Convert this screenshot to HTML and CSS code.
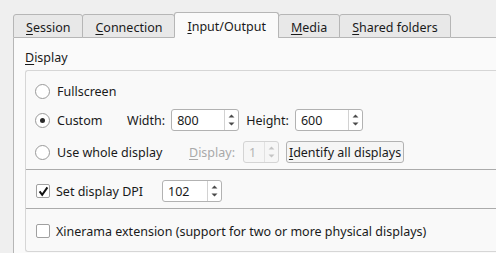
FILE: index.html
```html
<!DOCTYPE html>
<html>
<head>
<meta charset="utf-8">
<link rel="stylesheet" href="styles.css">
</head>
<body>
<div class="window">
  <div class="tabbar">
    <div class="tab"><u>S</u>ession</div>
    <div class="tab"><u>C</u>onnection</div>
    <div class="tab active"><u>I</u>nput/Output</div>
    <div class="tab"><u>M</u>edia</div>
    <div class="tab"><u>S</u>hared folders</div>
    <div class="tab-fill"></div>
  </div>
  <div class="pane">
    <div class="group-title"><u>D</u>isplay</div>
    <div class="group">
      <div class="section radios">
        <div class="row">
          <label class="opt"><span class="radio"></span>Fullscreen</label>
        </div>
        <div class="row">
          <label class="opt opt-custom"><span class="radio checked"></span>Custom</label>
          <span class="lbl">Width:</span>
          <div class="spin spin-wh"><span class="val">800</span><span class="arrows"><svg width="13" height="20" viewBox="0 0 13 20"><path d="M3.5 7.5 L6.5 4.5 L9.5 7.5 Z M3.5 12.5 L6.5 15.5 L9.5 12.5 Z" fill="#4a4a4a"/></svg></span></div>
          <span class="lbl lbl-h">Height:</span>
          <div class="spin spin-wh"><span class="val">600</span><span class="arrows"><svg width="13" height="20" viewBox="0 0 13 20"><path d="M3.5 7.5 L6.5 4.5 L9.5 7.5 Z M3.5 12.5 L6.5 15.5 L9.5 12.5 Z" fill="#4a4a4a"/></svg></span></div>
        </div>
        <div class="row">
          <label class="opt opt-whole"><span class="radio"></span>Use whole display</label>
          <span class="lbl disabled"><u>D</u>isplay:</span>
          <div class="spin spin-disp disabled"><span class="val">1</span><span class="arrows"><svg width="13" height="20" viewBox="0 0 13 20"><path d="M3.5 7.5 L6.5 4.5 L9.5 7.5 Z M3.5 12.5 L6.5 15.5 L9.5 12.5 Z" fill="#c4c4c4"/></svg></span></div>
          <button class="btn"><u>I</u>dentify all displays</button>
        </div>
      </div>
      <div class="sep"></div>
      <div class="section dpi">
        <div class="row">
          <label class="opt opt-dpi"><span class="check"><svg width="11" height="11" viewBox="0 0 11 11"><path d="M1.6 5.4 L4.2 8.8 L9.4 1.4" fill="none" stroke="#111111" stroke-width="2"/></svg></span>Set display DPI</label>
          <div class="spin spin-dpi"><span class="val">102</span><span class="arrows"><svg width="13" height="20" viewBox="0 0 13 20"><path d="M3.5 7.5 L6.5 4.5 L9.5 7.5 Z M3.5 12.5 L6.5 15.5 L9.5 12.5 Z" fill="#4a4a4a"/></svg></span></div>
        </div>
      </div>
      <div class="sep"></div>
      <div class="section xin">
        <div class="row">
          <label class="opt"><span class="check"></span>Xinerama extension (support for two or more physical displays)</label>
        </div>
      </div>
    </div>
  </div>
</div>
</body>
</html>
```

FILE: styles.css
```css
html, body {
  margin: 0;
  padding: 0;
  background: #efefef;
  width: 496px;
  height: 253px;
  overflow: hidden;
}
body {
  font-family: "Noto Sans", "Open Sans", "DejaVu Sans", sans-serif;
  font-size: 12.5px;
  color: #1a1a1a;
}
u {
  text-decoration: underline;
  text-underline-offset: 2px;
}
.window {
  padding: 12px 0 0 13px;
}
.tabbar {
  display: flex;
  align-items: flex-end;
  height: 26px;
}
.tab {
  box-sizing: border-box;
  height: 24px;
  padding: 0 12px;
  display: flex;
  align-items: center;
  padding-top: 3px;
  background: #e8e8e8;
  border: 1px solid #b6b6b6;
  border-radius: 3px 3px 0 0;
  margin-left: -1px;
  white-space: nowrap;
}
.tab:first-child {
  margin-left: 0;
}
.tab.active {
  height: 26px;
  background: #fafafa;
  border-bottom-color: #fafafa;
  padding-top: 2px;
}
.tab-fill {
  flex: 1;
  border-bottom: 1px solid #b6b6b6;
  height: 0;
}
.pane {
  background: #fafafa;
  border-left: 1px solid #b6b6b6;
  height: 215px;
  padding: 0 0 0 11px;
}
.group-title {
  height: 32px;
  line-height: 14px;
  padding-top: 13px;
  box-sizing: border-box;
}
.group {
  border: 1px solid #d6d6d6;
  border-right: none;
  border-radius: 3px 0 0 3px;
  background: #f9f9f9;
  height: 182px;
  box-sizing: border-box;
}
.section {
  padding-left: 9px;
}
.radios {
  padding-top: 9px;
  padding-bottom: 6px;
}
.dpi {
  padding-top: 10px;
  padding-bottom: 6px;
}
.xin {
  padding-top: 11px;
}
.row {
  display: flex;
  align-items: center;
  height: 22px;
  white-space: nowrap;
}
.radios .row + .row {
  margin-top: 7px;
}
.radios .row:last-child {
  margin-top: 10px;
}
.sep {
  height: 1px;
  background: #ababab;
}
.opt {
  display: flex;
  align-items: center;
  box-sizing: border-box;
}
.opt-custom { width: 92px; }
.opt-whole { width: 154px; }
.opt-dpi { width: 127px; }
.radio {
  box-sizing: border-box;
  width: 15px;
  height: 15px;
  border: 1px solid #9a9a9a;
  border-radius: 50%;
  background: #ffffff;
  margin-right: 7px;
  display: flex;
  align-items: center;
  justify-content: center;
}
.radio.checked::after {
  content: "";
  width: 5px;
  height: 5px;
  border-radius: 50%;
  background: #2a2a2a;
}
.check {
  box-sizing: border-box;
  width: 14px;
  height: 14px;
  border: 1px solid #a0a0a0;
  border-radius: 2px;
  background: #ffffff;
  margin: 0 6px 0 1px;
  display: flex;
  align-items: center;
  justify-content: center;
}
.lbl {
  margin-right: 6px;
}
.lbl-h {
  margin-left: 7px;
}
.lbl.disabled {
  color: #a9a9a9;
  margin-right: 8px;
}
.spin {
  box-sizing: border-box;
  height: 22px;
  border: 1px solid #b2b2b2;
  border-radius: 3px;
  background: #ffffff;
  display: flex;
  align-items: stretch;
}
.spin-wh { width: 68px; }
.spin-disp { width: 36px; }
.spin-dpi { width: 60px; }
.val {
  flex: 1;
  padding-left: 5px;
  display: flex;
  align-items: center;
}
.arrows {
  width: 13px;
  border-left: 1px solid #d2d2d2;
  display: flex;
  align-items: center;
  justify-content: center;
}
.spin.disabled {
  background: #f6f6f6;
  border-color: #d4d4d4;
}
.spin.disabled .val {
  color: #b4b4b4;
}
.spin.disabled .arrows {
  border-left-color: #e2e2e2;
}
.btn {
  box-sizing: border-box;
  margin-left: 7px;
  height: 22px;
  width: 118px;
  padding: 0;
  border: 1px solid #b2b2b2;
  border-radius: 3px;
  background: #f5f5f5;
  font: inherit;
  color: #1a1a1a;
  white-space: nowrap;
}
```
